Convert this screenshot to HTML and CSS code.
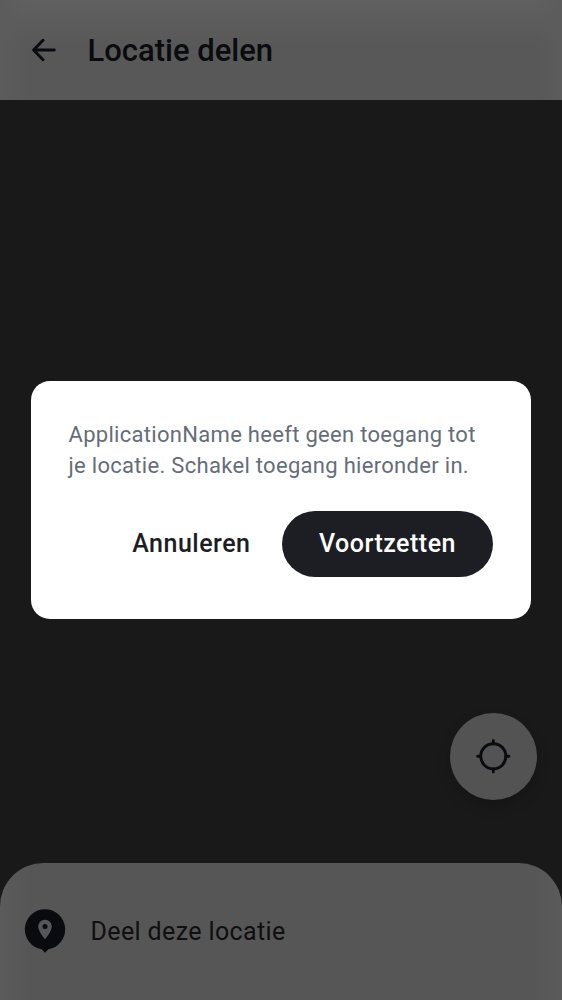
FILE: index.html
```html
<!DOCTYPE html>
<html lang="nl">
<head>
<meta charset="utf-8">
<title>Locatie delen</title>
<link rel="stylesheet" href="styles.css">
</head>
<body>
<div class="screen">
  <header class="topbar">
    <svg class="back" width="24" height="24" viewBox="0 0 24 24"><path d="M22.3 12H1.8M11 2.2L1.6 12l9.4 9.8"/></svg>
    <h1 class="title">Locatie delen</h1>
  </header>
  <main class="map">
    <button class="locate" aria-label="Mijn locatie">
      <svg width="36" height="36" viewBox="0 0 36 36"><circle cx="18.3" cy="18.3" r="12.6"/><path d="M18.3 2.7v3M18.3 30.9v3M2.7 18.3h3M30.9 18.3h3"/></svg>
    </button>
  </main>
  <footer class="sheet">
    <svg class="pin" width="42" height="46" viewBox="0 0 42 46"><path class="pin-body" d="M21 1.2a20.2 20.2 0 0 1 3.4 40.1L21 44.8l-3.4-3.5A20.2 20.2 0 0 1 21 1.2z"/><path class="pin-mark" fill-rule="evenodd" d="M21 11.7c-3.8 0-6.8 3-6.8 6.8 0 4.8 6.8 12.7 6.8 12.7s6.8-7.9 6.8-12.7c0-3.8-3-6.8-6.8-6.8zm0 4.4a2.5 2.5 0 1 1 0 5 2.5 2.5 0 0 1 0-5z"/></svg>
    <span class="share">Deel deze locatie</span>
  </footer>
</div>
<div class="overlay">
  <section class="dialog" role="dialog">
    <p class="message">ApplicationName heeft geen toegang tot<br>je locatie. Schakel toegang hieronder in.</p>
    <div class="actions">
      <button class="cancel">Annuleren</button>
      <button class="confirm">Voortzetten</button>
    </div>
  </section>
</div>
</body>
</html>
```
FILE: styles.css
```css
* { box-sizing: border-box; }
body { margin: 0; font-family: Roboto, sans-serif; }
button { border: 0; padding: 0; background: none; font: inherit; letter-spacing: inherit; }
.screen { height: 1000px; display: flex; flex-direction: column; background: #191919; }
.topbar {
  height: 100px;
  display: flex;
  align-items: center;
  gap: 31.5px;
  padding-left: 32px;
  background:
    linear-gradient(to right, #5c5c5c, rgba(92, 92, 92, 0) 28px, rgba(92, 92, 92, 0) calc(100% - 28px), #5c5c5c),
    linear-gradient(#606060, #585858 45px);
}
.back { fill: none; stroke: #0a0b0e; stroke-width: 2.9; stroke-linecap: round; stroke-linejoin: round; }
.title { margin: 0; padding-top: 1px; font-size: 31px; font-weight: 500; line-height: 36px; color: #0a0b0e; }
.map { flex: 1; display: flex; align-items: flex-end; justify-content: flex-end; padding: 0 25px 62.5px 0; }
.locate {
  width: 87.5px;
  height: 87.5px;
  display: flex;
  align-items: center;
  justify-content: center;
  border-radius: 50%;
  background: #535353;
  box-shadow: 0 6px 14px rgba(0, 0, 0, 0.18);
}
.locate svg { fill: none; stroke: #0a0b0e; stroke-width: 2.9; stroke-linecap: round; }
.sheet {
  height: 137.5px;
  display: flex;
  align-items: center;
  gap: 24.5px;
  padding-left: 24px;
  border-radius: 43.5px 43.5px 0 0;
  background: linear-gradient(to right, #5b5b5b, #565656 28px, #565656 calc(100% - 28px), #5b5b5b);
}
.pin-body { fill: #0a0b0e; }
.pin-mark { fill: #565656; }
.share { padding-top: 1px; font-size: 25px; line-height: 30px; letter-spacing: 0.38px; color: #0f0f10; }
.overlay { position: absolute; inset: 0; display: flex; align-items: center; justify-content: center; }
.dialog { width: 500px; height: 238px; padding: 38px 38px 0 37.5px; border-radius: 19px; background: #fff; }
.message { margin: 0; font-size: 22px; line-height: 31px; letter-spacing: 0.3px; white-space: nowrap; color: #656d79; }
.actions { margin-top: 30px; display: flex; justify-content: flex-end; align-items: center; gap: 31.5px; font-size: 25px; font-weight: 500; letter-spacing: 0.5px; }
.cancel { padding-bottom: 1px; color: #1d1e24; }
.confirm { width: 211px; height: 65.5px; padding-bottom: 1px; border-radius: 33px; background: #1d1e24; color: #fff; }
```
